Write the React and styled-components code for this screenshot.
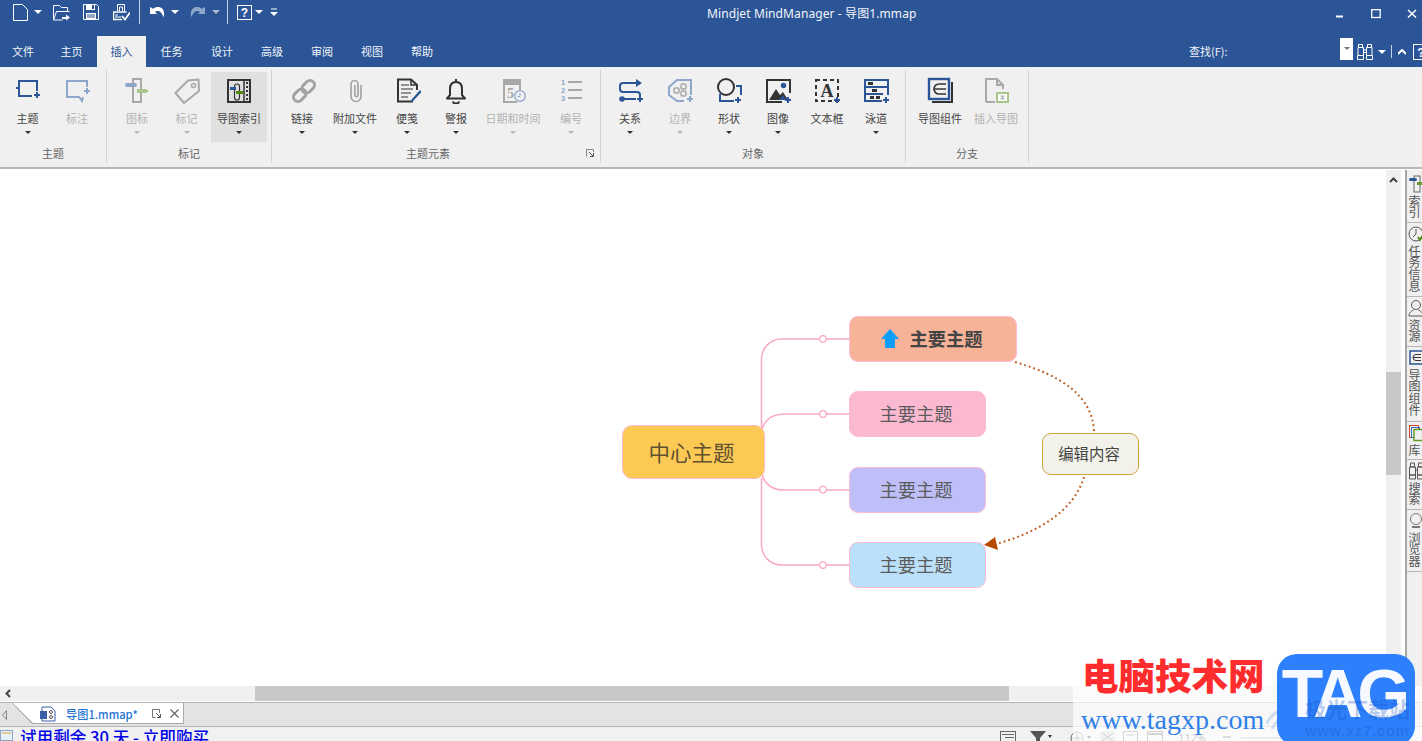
import React from 'react';
import styled, { createGlobalStyle } from 'styled-components';

const CJK = '"Noto Sans CJK SC", "Noto Sans", sans-serif';
const BLUE = '#2b5597';
const LBLUE = '#8fa6cb';
const DARK = '#333333';
const GRAY = '#a8a8a8';
const PINK = '#f9a8c6';

const Global = createGlobalStyle`
  html, body { margin: 0; padding: 0; background: #fff; }
  * { box-sizing: border-box; }
`;

const Root = styled.div`
  position: relative; width: 1422px; height: 741px; overflow: hidden;
  display: flex; flex-direction: column; font-family: ${CJK}; background: #fff;
`;

/* title bar */
const TitleBar = styled.header`
  height: 36px; background: ${BLUE}; display: flex; flex-shrink: 0; color: #fff;
`;
const QuickBar = styled.div`
  width: 707px; height: 24px; padding-left: 13px; display: flex; align-items: center; flex-shrink: 0;
`;
const QuickSlot = styled.span`
  display: flex; margin-left: ${p => p.$ml || 0}px; flex-shrink: 0;
`;
const QuickSep = styled.span`
  width: 1px; height: ${p => p.$h || 24}px; background: #c9d4e6; margin-left: ${p => p.$ml}px; flex-shrink: 0;
`;
const Caret = styled.span`
  display: block; width: 0; height: 0; flex-shrink: 0;
  border-left: ${p => p.$s || 4}px solid transparent;
  border-right: ${p => p.$s || 4}px solid transparent;
  border-top: ${p => p.$s || 4}px solid ${p => p.$c || '#fff'};
  margin-left: ${p => p.$ml || 0}px;
`;
const AppTitle = styled.div`
  font: 12px/28px "Noto Sans", ${CJK}; color: #f4f6fa; white-space: nowrap; letter-spacing: .1px;
`;
const WindowControls = styled.div`
  margin-left: auto; margin-right: -8px; display: flex; height: 28px; flex-shrink: 0;
`;
const WinBtn = styled.span`
  width: 36px; display: flex; align-items: center; justify-content: center;
`;

/* tabs */
const TabRow = styled.nav`
  height: 31px; background: ${BLUE}; display: flex; flex-shrink: 0; align-items: stretch;
`;
const Tab = styled.span`
  width: ${p => p.$w || 50}px; display: flex; align-items: center; justify-content: center; padding-bottom: 2px;
  font-size: 11px; color: ${p => p.$active ? BLUE : '#f2f5fa'};
  background: ${p => p.$active ? '#f0f0f0' : 'transparent'};
`;
const SearchGroup = styled.div`
  margin-left: auto; display: flex; align-items: center; width: 233px; flex-shrink: 0; color: #fff;
`;
const SearchLabel = styled.span`
  width: 151px; flex-shrink: 0; font-size: 11px; color: #f2f5fa; padding-bottom: 2px;
`;
const SearchCombo = styled.span`
  width: 13px; height: 22px; flex-shrink: 0; background: #fff; display: flex; align-items: center; justify-content: center;
  margin-top: -6px;
`;

/* ribbon */
const Ribbon = styled.section`
  height: 100px; background: #f0f0f0; display: flex; padding-top: 3px; flex-shrink: 0;
`;
const Group = styled.div`
  width: ${p => p.$w}px; height: 93px; border-right: 1px solid #d4d4d4; flex-shrink: 0;
  display: flex; flex-direction: column;
`;
const GroupButtons = styled.div`
  display: flex; height: 70px; margin-top: 2px; padding-left: ${p => p.$pl}px;
`;
const RBtn = styled.div`
  width: ${p => p.$w}px; height: 70px; flex-shrink: 0; display: flex; flex-direction: column; align-items: center;
  padding-top: 4px; background: ${p => p.$active ? '#e0e0e0' : 'transparent'};
`;
const RIcon = styled.span`
  width: 28px; height: 28px; display: flex;
`;
const RLabel = styled.span`
  font-size: 11px; line-height: 16px; margin-top: 6px; white-space: nowrap;
  color: ${p => p.$off ? '#b2b2b2' : '#444'};
`;
const RCaret = styled(Caret)`
  margin-top: 5px;
`;
const GroupFoot = styled.div`
  display: flex; align-items: center; height: 16px; margin-top: 3px;
`;
const GroupName = styled.span`
  flex: 1; text-align: center; font-size: 11px; line-height: 16px; color: #666; padding-right: ${p => p.$pr || 0}px;
`;
const Launcher = styled.span`
  display: flex; margin-right: 6px;
`;
const RibbonEdge = styled.div`
  height: 3px; flex-shrink: 0; background: #fff; border-top: 2px solid #b6b6b6;
`;

/* main */
const Main = styled.main`
  flex: 1; min-height: 0; display: flex;
`;
const WorkColumn = styled.div`
  width: 1401px; display: flex; flex-direction: column; flex-shrink: 0;
`;
const WorkRow = styled.div`
  height: 516px; display: flex;
`;
const Canvas = styled.div`
  position: relative; width: 1386px; height: 516px; background: #fff; flex-shrink: 0;
`;
const Lines = styled.svg`
  position: absolute; left: 0; top: 0;
`;
const VScroll = styled.div`
  width: 15px; background: #f0f0f0; display: flex; flex-direction: column; align-items: center;
`;
const VThumb = styled.div`
  width: 15px; height: 103px; background: #c8c8c8; margin-top: 189px;
`;
const ArrowBox = styled.span`
  display: flex; margin-top: ${p => p.$mt || 0}px; margin-left: ${p => p.$ml || 0}px;
`;
const HScroll = styled.div`
  height: 15px; background: #f0f0f0; display: flex; align-items: center; position: relative; flex-shrink: 0;
`;
const HThumb = styled.div`
  width: 754px; height: 15px; background: #c8c8c8; margin-left: 244px;
`;
const Gutter = styled.div`
  width: 6px; flex-shrink: 0; background: #fff; border-right: 2px solid #a6a6a6;
`;
const SidePanel = styled.aside`
  flex: 1; background: #f0f0f0; padding-top: 3px; overflow: hidden; display: flex; flex-direction: column;
`;
const SideTab = styled.div`
  height: ${p => p.$h}px; flex-shrink: 0; border-bottom: 1px solid #b5b5b5; display: flex; flex-direction: column;
  padding: 2px 0 0 1px; overflow: hidden;
`;
const SideIcon = styled.span`
  display: flex; width: 20px; height: 18px; flex-shrink: 0;
`;
const SideText = styled.span`
  writing-mode: vertical-rl; text-orientation: upright; font-size: 12px; line-height: 13px; color: #555;
  margin-top: 2px; letter-spacing: -.2px; align-self: flex-start;
`;

/* map nodes */
const Node = styled.div`
  position: absolute; left: ${p => p.$x}px; top: ${p => p.$y - 170}px; width: ${p => p.$w}px; height: ${p => p.$h}px;
  background: ${p => p.$bg}; border: ${p => p.$bw || 1.5}px solid ${p => p.$bc || '#fbbcd3'};
  border-radius: ${p => p.$r || 9}px; display: flex; align-items: center; justify-content: center; padding: 0 3px 2px 0;
  font-size: ${p => p.$fs || 18.3}px; color: ${p => p.$c || '#5c5c5c'}; font-weight: ${p => p.$fw || 400}; white-space: nowrap;
`;
const NodeIcon = styled.span`
  display: flex; margin-right: 10px; margin-left: 1px;
`;

/* doc tabs & status */
const DocBar = styled.div`
  height: 25px; flex-shrink: 0; background: #e3e3e3; border-top: 1px solid #b4b4b4; border-bottom: 1px solid #b4b4b4;
  display: flex; align-items: stretch;
`;
const DocPrev = styled.span`
  width: 12px; display: flex; align-items: center; padding-left: 2px; flex-shrink: 0;
`;
const DocTab = styled.div`
  width: 172px; height: 21px; flex-shrink: 0; position: relative; background: #a9a9a9;
  clip-path: polygon(0 0, 100% 0, 100% 100%, 20px 100%);
  display: flex; align-items: center; padding-left: 28px;
  &::before {
    content: ''; position: absolute; inset: 0 1px 1px 0; background: #fff;
    clip-path: polygon(1px 0, 100% 0, 100% 100%, 21px 100%);
  }
  & > * { position: relative; }
`;
const DocName = styled.span`
  font-size: 11.2px; font-weight: 500; color: #1f74d4; margin-left: 10px; white-space: nowrap; width: 81px;
`;
const DocAction = styled.span`
  display: flex; width: 18px; justify-content: center;
`;
const StatusBar = styled.footer`
  height: 14px; flex-shrink: 0; background: #f1f1f1; display: flex; align-items: flex-start; overflow: hidden;
`;
const Trial = styled.span`
  font-size: 16.6px; line-height: 20px; font-weight: 500; color: #0000e6; white-space: nowrap; margin-left: 7px; flex-shrink: 0;
`;
const StatusRight = styled.div`
  margin-left: 791px; display: flex; align-items: flex-start; padding-top: 4px; flex-shrink: 0;
`;
const StatusSlot = styled.span`
  display: flex; margin-left: ${p => p.$ml || 0}px; flex-shrink: 0;
`;
const Zoom = styled.span`
  font: 11px/12px "Noto Sans", sans-serif; color: #555; margin-left: ${p => p.$ml}px; margin-top: 1px;
`;

/* watermark */
const Wash = styled.div`
  position: absolute; left: 1073px; top: 686px; width: 349px; height: 55px; background: rgba(255,255,255,.72);
`;
const RedMark = styled.div`
  position: absolute; left: 1082px; top: 649px; font-size: 36.5px; line-height: 52px; font-weight: 900; color: #fe2c2c; white-space: nowrap;
`;
const UrlMark = styled.div`
  position: absolute; left: 1081px; top: 704px; font: 28px/32px "Liberation Serif", serif; color: #2f80e8; white-space: nowrap;
`;
const TagBadge = styled.div`
  position: absolute; left: 1277px; top: 654px; width: 138px; height: 92px; border-radius: 20px; background: #2d7ffb;
  display: flex; align-items: flex-start; justify-content: center;
  font: 700 68px/78px "Liberation Sans", sans-serif; letter-spacing: -5px; color: #f6f9ff; padding-right: 5px;
`;
const FaintCn = styled.div`
  position: absolute; left: 1305px; top: 695px; font-size: 21px; line-height: 26px; font-weight: 700; color: rgba(20,80,190,.28); white-space: nowrap;
`;
const FaintUrl = styled.div`
  position: absolute; left: 1305px; top: 722px; font: 700 15px/18px "Liberation Sans", sans-serif; color: rgba(20,80,190,.28); white-space: nowrap; letter-spacing: .6px;
`;
const Swirl = styled.svg`
  position: absolute; left: 1263px; top: 702px;
`;

/* drawing helpers */
const Ic = ({ children, w = 28, h = 28, fill = 'none' }) => (
  <svg width={w} height={h} viewBox={`0 0 ${w} ${h}`} fill={fill} xmlns="http://www.w3.org/2000/svg">{children}</svg>
);
const Plus = ({ x, y, c = BLUE, s = 3 }) => (
  <path d={`M${x - s} ${y}h${s * 2}M${x} ${y - s}v${s * 2}`} stroke={c} strokeWidth="2" fill="none" />
);

const ITopic = () => (<Ic>
  <rect x="5" y="5" width="18" height="15" stroke={BLUE} strokeWidth="2" />
  <path d="M2 12h3" stroke={BLUE} strokeWidth="2" />
  <rect x="18" y="15" width="10" height="9" fill="#f0f0f0" />
  <path d="M23 5v9M5 20h13" stroke={BLUE} strokeWidth="2" />
  <Plus x={23} y={19} />
</Ic>);
const ICallout = () => (<Ic>
  <path d="M24 11V5H4v16h12l3 4 1-4" stroke={LBLUE} strokeWidth="2" />
  <Plus x={24} y={15} c={LBLUE} />
</Ic>);
const IIcon = () => (<Ic>
  <rect x="10" y="3" width="8" height="23" stroke={GRAY} strokeWidth="2" />
  <rect x="2" y="7" width="12" height="4" rx="2" fill={LBLUE} />
  <path d="M14 13h9l3 2-3 2h-9z" fill="#a9c68a" />
</Ic>);
const ITag = () => (<Ic>
  <path d="M15 4.5 25.5 3.5 26 15 11 27 2.5 17z" stroke={GRAY} strokeWidth="2" strokeLinejoin="round" />
  <circle cx="20.5" cy="9.5" r="2" stroke={GRAY} strokeWidth="1.5" />
</Ic>);
const IIndex = () => (<Ic>
  <rect x="3" y="4" width="22" height="22" stroke={DARK} strokeWidth="2" />
  <path d="M19 4v22" stroke={DARK} strokeWidth="1.5" />
  <path d="M21 7h2M21 11h2M21 15h2M21 19h2M21 23h2" stroke={DARK} strokeWidth="2" />
  <rect x="9.5" y="8" width="5" height="16" rx="2.5" stroke={DARK} strokeWidth="1.2" />
  <rect x="5" y="11" width="6" height="3" fill={BLUE} />
  <rect x="11" y="15" width="7" height="3" fill="#4f8a10" />
</Ic>);
const ILink = () => (<Ic>
  <g transform="rotate(-45 16 15)" stroke="#a2a2a2" strokeWidth="3">
    <rect x="3" y="10.5" width="14" height="9" rx="4.5" />
    <rect x="15" y="10.5" width="14" height="9" rx="4.5" />
  </g>
</Ic>);
const IClip = () => (<Ic>
  <path d="M20 9v11.5a5 5 0 0 1-10 0V8a3.5 3.5 0 0 1 7 0v11a1.6 1.6 0 0 1-3.2 0V9" stroke="#a2a2a2" strokeWidth="1.6" />
</Ic>);
const INote = () => (<Ic>
  <path d="M24 14V9l-6-5.5H5v22h15" stroke={DARK} strokeWidth="2" />
  <path d="M18 3.5V9h6" stroke={DARK} strokeWidth="1.5" />
  <path d="M8 9h8M8 13h12M8 17h10M8 21h7" stroke={DARK} strokeWidth="1.2" />
  <path d="M27 14 19 23l-2 3.5 3.5-2L28.5 16z" fill={BLUE} />
</Ic>);
const IBell = () => (<Ic>
  <path d="M14 6c-4 0-6 3-6 7v6l-3 3.5h18L20 19v-6c0-4-2-7-6-7z" stroke={DARK} strokeWidth="2" strokeLinejoin="round" />
  <path d="M14 3v3M11 25.5a3 2 0 0 0 6 0" stroke={DARK} strokeWidth="2" />
</Ic>);
const IDate = () => (<Ic>
  <rect x="4" y="3" width="18" height="6" fill={GRAY} />
  <path d="M5 9v17h13M21 9v5" stroke={GRAY} strokeWidth="2" />
  <text x="8" y="22" fontFamily="Liberation Serif, serif" fontSize="14" fontWeight="700" fill={GRAY}>5</text>
  <circle cx="21" cy="20" r="5.3" fill="#f0f0f0" stroke={LBLUE} strokeWidth="1.3" />
  <path d="M21 17v3.5h-2.5" stroke={LBLUE} strokeWidth="1" />
</Ic>);
const INumber = () => (<Ic>
  <path d="M11 6h14M11 14h14M11 22h14" stroke={GRAY} strokeWidth="2" />
  <text x="4" y="9" fontFamily="Liberation Sans, sans-serif" fontSize="7.5" fontWeight="700" fill={LBLUE}>1</text>
  <text x="4" y="17" fontFamily="Liberation Sans, sans-serif" fontSize="7.5" fontWeight="700" fill={LBLUE}>2</text>
  <text x="4" y="25" fontFamily="Liberation Sans, sans-serif" fontSize="7.5" fontWeight="700" fill={LBLUE}>3</text>
</Ic>);
const IRelation = () => (<Ic>
  <path d="M21 7H7a3 3 0 0 0-3 3v3a3 3 0 0 0 3 3h14a3 3 0 0 1 3 3v1" stroke={BLUE} strokeWidth="2" />
  <path d="M20 3l6 4-6 4z" fill={BLUE} />
  <circle cx="6" cy="23" r="2.8" fill={BLUE} />
  <path d="M6 23h14" stroke={BLUE} strokeWidth="2" />
  <Plus x={24} y={23} />
</Ic>);
const IBoundary = () => (<Ic>
  <path d="M25 19V4H11L3 11v8l8 6h7" stroke={LBLUE} strokeWidth="2" />
  <rect x="8" y="12" width="5" height="5" rx="1.5" stroke={GRAY} strokeWidth="1.5" />
  <rect x="15" y="8" width="5" height="5" rx="1.5" stroke={GRAY} strokeWidth="1.5" />
  <rect x="15" y="15" width="5" height="5" rx="1.5" stroke={GRAY} strokeWidth="1.5" />
  <Plus x={24} y={23} c={LBLUE} />
</Ic>);
const IShape = () => (<Ic>
  <path d="M21 10h5v9M5 18v7h14" stroke={BLUE} strokeWidth="2" />
  <circle cx="11" cy="11" r="8" fill="#f0f0f0" stroke={DARK} strokeWidth="2" />
  <Plus x={23} y={24} />
</Ic>);
const IImage = () => (<Ic>
  <path d="M26 17V4H3v22h15" stroke={DARK} strokeWidth="2" />
  <path d="M5 24 12 13l4 6 3-3 5 8z" fill={DARK} />
  <circle cx="19.5" cy="9.5" r="2.7" fill={BLUE} />
  <path d="M15 24l4-5 3 5z" fill={BLUE} />
  <Plus x={24} y={24} />
</Ic>);
const ITextBox = () => (<Ic>
  <rect x="3" y="4" width="22" height="21" stroke={DARK} strokeWidth="2" strokeDasharray="4 3" />
  <text x="14" y="21" textAnchor="middle" fontFamily="Liberation Serif, serif" fontWeight="700" fontSize="18" fill={DARK}>A</text>
  <Plus x={24} y={24} />
</Ic>);
const ILane = () => (<Ic>
  <path d="M26 19V4H3v21h17M3 11h23M3 18h18" stroke={BLUE} strokeWidth="2" />
  <path d="M6 6h5v3H6zM10 13h5v3h-5zM8 20h4v3H8zM14 20h4v3h-4z" fill={DARK} />
  <Plus x={24} y={24} />
</Ic>);
const IPart = () => (<Ic>
  <path d="M26 6v20H6" stroke={DARK} strokeWidth="2" />
  <rect x="3" y="3" width="20" height="20" stroke={BLUE} strokeWidth="2.4" />
  <path d="M13 8a5 5 0 0 0 0 10h7M9 13h11M13 8h7" stroke={DARK} strokeWidth="1.7" />
</Ic>);
const IInsert = () => (<Ic>
  <path d="M4 26V3h11l6 6v4M15 3v6h6M4 26h9" stroke={GRAY} strokeWidth="2" />
  <rect x="15" y="17" width="11" height="9" fill="#fff" stroke="#a9c68a" strokeWidth="2" />
  <path d="M18 19.5l5 4M23 19.5l-5 4M20.5 19v5" stroke={GRAY} strokeWidth=".9" />
</Ic>);

const groups = [
  { w: 107, pl: 3, name: '主题', btns: [
    { w: 49, l: '主题', I: ITopic, c: 1 }, { w: 50, l: '标注', I: ICallout, off: 1 }] },
  { w: 165, pl: 5, name: '标记', btns: [
    { w: 50, l: '图标', I: IIcon, off: 1, c: 1 }, { w: 49, l: '标记', I: ITag, off: 1, c: 1 },
    { w: 56, l: '导图索引', I: IIndex, c: 1, active: 1 }] },
  { w: 329, pl: 5, name: '主题元素', launcher: 1, btns: [
    { w: 50, l: '链接', I: ILink, c: 1 }, { w: 56, l: '附加文件', I: IClip, c: 1 }, { w: 48, l: '便笺', I: INote, c: 1 },
    { w: 50, l: '警报', I: IBell, c: 1 }, { w: 64, l: '日期和时间', I: IDate, off: 1, c: 1 }, { w: 52, l: '编号', I: INumber, off: 1, c: 1 }] },
  { w: 305, pl: 4, name: '对象', btns: [
    { w: 50, l: '关系', I: IRelation, c: 1 }, { w: 50, l: '边界', I: IBoundary, off: 1, c: 1 }, { w: 48, l: '形状', I: IShape, c: 1 },
    { w: 50, l: '图像', I: IImage, c: 1 }, { w: 48, l: '文本框', I: ITextBox }, { w: 50, l: '泳道', I: ILane, c: 1 }] },
  { w: 123, pl: 5, name: '分支', btns: [
    { w: 58, l: '导图组件', I: IPart }, { w: 54, l: '插入导图', I: IInsert, off: 1 }] },
];

const tabs = [['文件', 46], ['主页', 51], ['插入', 49, true], ['任务', 51], ['设计'], ['高级'], ['审阅'], ['视图'], ['帮助']];

const W = '#fff';
const qDoc = <Ic w={15} h={17}><path d="M.5.5h9l5 5v11H.5z" stroke={W} /></Ic>;
const qOpen = <Ic w={17} h={17}><path d="M.5 16V1.5h6l2 2h6v4M.5 16l3-8.5h13M.5 16h9" stroke={W} /><path d="M9 13h4v-2.5l4 3-4 3V15H9z" fill={W} /></Ic>;
const qSave = <Ic w={16} h={16}><path d="M.5.5h13l2 2v13H.5z" stroke={W} /><path d="M3 0h9v6H3z" fill={W} /><path d="M9 1h2v4H9z" fill={BLUE} /><path d="M3 9h10v7H3z" fill={W} /><path d="M4 11h8M4 13h8" stroke={BLUE} /></Ic>;
const qPrint = <Ic w={17} h={17}><path d="M4.5 7V.5h7V7" stroke={W} /><path d="M6.5 7V3h3v4" stroke={W} /><path d="M9 15.500H.5V8h13" stroke={W} strokeWidth="1.400" /><path d="M2 11h3M2 13h6" stroke={W} /><path d="M9 12l3 3.500 5-7" stroke={W} strokeWidth="1.800" /></Ic>;
const qUndo = <Ic w={16} h={13}><path d="M1 1v7h7L6 5.800c3-2 6.500-1 8.500 5.500 2-6-1-10.300-5.500-10.300-2 0-3.500.6-4.800 1.800z" fill={W} /></Ic>;
const qRedo = <Ic w={16} h={13}><path d="M15 1v7H8l2-2.200c-3-2-6.500-1-8.500 5.500-2-6 1-10.300 5.500-10.300 2 0 3.500.6 4.800 1.800z" fill="#8ea6c9" /></Ic>;
const qHelp = (s = 15) => <Ic w={s} h={s}><rect x=".5" y=".5" width={s - 1} height={s - 1} stroke={W} /><text x={s / 2} y={s - 3} textAnchor="middle" fontFamily="Liberation Sans, sans-serif" fontWeight="700" fontSize="12" fill={W}>?</text></Ic>;
const qMore = <Ic w={8} h={9}><path d="M1 1h6" stroke={W} /><path d="M0 4h8L4 8z" fill={W} /></Ic>;

const sideTabs = [
  { h: 50, t: '索引', i: <Ic w={20} h={18}><rect x="6" y="1" width="6" height="16" stroke="#666" /><rect x="1" y="3" width="8" height="3" rx="1.500" fill={BLUE} /><rect x="9" y="7" width="7" height="3" fill="#6a9a2c" /></Ic> },
  { h: 74, t: '任务信息', i: <Ic w={20} h={18}><circle cx="8" cy="9" r="7" stroke="#555" /><path d="M8 4v5l-3 3" stroke="#555" /><path d="M10 12l2 3 3-5" stroke="#4f8a10" strokeWidth="2" /></Ic> },
  { h: 50, t: '资源', i: <Ic w={20} h={18}><circle cx="8" cy="6" r="4.500" stroke="#555" /><path d="M1 17c0-4 3-5 4.500-6M15 17c0-4-3-5-4.500-6M1 17h14" stroke="#555" /></Ic> },
  { h: 75, t: '导图组件', i: <Ic w={20} h={18}><rect x="2" y="2" width="13" height="13" stroke={BLUE} strokeWidth="1.500" /><path d="M8 5.500a3 3 0 0 0 0 6h5M5 8.500h8M8 5.500h5" stroke="#333" /></Ic> },
  { h: 38, t: '库', i: <Ic w={20} h={18}><rect x="1.500" y="1.500" width="9" height="12" stroke="#d8452e" /><rect x="3.500" y="3.500" width="8" height="10" stroke="#3a6fc0" /><rect x="6" y="5.500" width="10" height="11" fill="#f0f0f0" stroke="#5d9a1c" strokeWidth="1.400" /></Ic> },
  { h: 50, t: '搜索', i: <Ic w={20} h={18}><path d="M2.500 1h4v4h-4zM10.500 1h4v4h-4zM1.500 5h6v8h-6zM9.500 5h6v8h-6zM7.500 8h2M1.500 13h6v4h-6zM9.500 13h6v4h-6z" stroke="#555" /></Ic> },
  { h: 62, t: '浏览器', i: <Ic w={20} h={18}><circle cx="8" cy="7" r="5.500" stroke="#777" /><path d="M4 15h8" stroke="#777" strokeWidth="2" /></Ic> },
];

function Mind() {
  return (
    <Canvas>
      <Lines width="1386" height="516" viewBox="0 170 1386 516" fill="none">
        <g stroke={PINK} strokeWidth="1.500">
          <path d="M761.500 428V359a20 20 0 0 1 20-20H849" />
          <path d="M761.500 478V545a20 20 0 0 0 20 20H849" />
          <path d="M762 430Q766 414 785 414H849" />
          <path d="M762 474Q766 490 785 490H849" />
        </g>
        <g stroke={PINK} strokeWidth="1.300" fill="#fff">
          <circle cx="823" cy="339" r="3.300" />
          <circle cx="823" cy="414" r="3.300" />
          <circle cx="823" cy="489.500" r="3.300" />
          <circle cx="823" cy="565" r="3.300" />
        </g>
        <g stroke="#bf5a1c" strokeWidth="2" strokeDasharray="1.800 3">
          <path d="M1015 362C1060 375 1092 395 1094 431" />
          <path d="M1084 477C1074 510 1040 532 996 544" />
        </g>
        <path d="M984 545 995 537 998 550z" fill="#b84a00" />
      </Lines>
      <Node $x={621.500} $y={425} $w={143} $h={54} $bg="#fdc955" $fs={21.500} $c="#5d5130" $r={10}>中心主题</Node>
      <Node $x={849} $y={316} $w={168} $h={46} $bg="#f7b398" $fw={700} $c="#444">
        <NodeIcon>
          <Ic w={18} h={19}><path d="M9 0l9 10h-4v9H4v-9H0z" fill="#0a9fff" /></Ic>
        </NodeIcon>
        主要主题
      </Node>
      <Node $x={849} $y={391} $w={137} $h={46} $bg="#fbb9d1">主要主题</Node>
      <Node $x={849} $y={467} $w={137} $h={46} $bg="#bebff8">主要主题</Node>
      <Node $x={849} $y={542} $w={137} $h={46} $bg="#bbe1fa">主要主题</Node>
      <Node $x={1042} $y={433} $w={97} $h={42} $bg="#f3f2ea" $bc="#cba63f" $bw={1} $fs={15.400} $c="#444" $r={9}>编辑内容</Node>
    </Canvas>
  );
}

export default function App() {
  return (
    <Root>
      <Global />
      <TitleBar>
        <QuickBar>
          <QuickSlot>{qDoc}</QuickSlot>
          <Caret $ml={6} />
          <QuickSlot $ml={11}>{qOpen}</QuickSlot>
          <QuickSlot $ml={13}>{qSave}</QuickSlot>
          <QuickSlot $ml={14}>{qPrint}</QuickSlot>
          <QuickSep $ml={9} />
          <QuickSlot $ml={9}>{qUndo}</QuickSlot>
          <Caret $ml={6} />
          <QuickSlot $ml={11}>{qRedo}</QuickSlot>
          <Caret $ml={6} $c="#a7b8d3" />
          <QuickSep $ml={7} />
          <QuickSlot $ml={9}>{qHelp(15)}</QuickSlot>
          <Caret $ml={3} />
          <QuickSlot $ml={7}>{qMore}</QuickSlot>
        </QuickBar>
        <AppTitle>Mindjet MindManager - 导图1.mmap</AppTitle>
        <WindowControls>
          <WinBtn><Ic w={8} h={10}><path d="M0 7.500h7" stroke={W} strokeWidth="2" /></Ic></WinBtn>
          <WinBtn><Ic w={10} h={10}><rect x=".7" y=".7" width="8.500" height="7.800" stroke={W} strokeWidth="1.300" /></Ic></WinBtn>
          <WinBtn><Ic w={10} h={10}><path d="M1 1l8 7.500M9 1 1 8.500" stroke={W} strokeWidth="1.500" /></Ic></WinBtn>
        </WindowControls>
      </TitleBar>
      <TabRow>
        {tabs.map(([t, w, a]) => <Tab key={t} $w={w} $active={a}>{t}</Tab>)}
        <SearchGroup>
          <SearchLabel>查找(F):</SearchLabel>
          <SearchCombo><Caret $s={3} $c="#777" /></SearchCombo>
          <QuickSlot $ml={4}>
            <Ic w={17} h={17}><path d="M1.500 1.500h4v3h-4zM10.500 1.500h4v3h-4zM1 4.500h5.500v8H1zM9.500 4.500H15v8H9.500zM6.500 7h3M6.500 9.500h3M.5 12.500h6v4h-6zM9.500 12.500h6v4h-6z" stroke={W} /></Ic>
          </QuickSlot>
          <Caret $ml={4} />
          <QuickSep $ml={5} $h={13} />
          <QuickSlot $ml={6}><Ic w={8} h={6}><path d="M0 5l4-4 4 4" stroke={W} strokeWidth="2" /></Ic></QuickSlot>
          <QuickSlot $ml={7}>{qHelp(16)}</QuickSlot>
        </SearchGroup>
      </TabRow>
      <Ribbon>
        {groups.map(g => (
          <Group key={g.name} $w={g.w}>
            <GroupButtons $pl={g.pl}>
              {g.btns.map(b => (
                <RBtn key={b.l} $w={b.w} $active={b.active}>
                  <RIcon><b.I /></RIcon>
                  <RLabel $off={b.off}>{b.l}</RLabel>
                  {b.c ? <RCaret $s={3.500} $c={b.off ? '#b8b8b8' : '#333'} /> : null}
                </RBtn>
              ))}
            </GroupButtons>
            <GroupFoot>
              <GroupName $pr={g.launcher ? 2 : 0}>{g.name}</GroupName>
              {g.launcher ? (
                <Launcher>
                  <Ic w={8} h={8}><path d="M.5 3V.5H7.500V3M.5 .5v7" stroke="#888" /><path d="M3 3l4 4M7.500 4v3.500H4" stroke="#555" /></Ic>
                </Launcher>
              ) : null}
            </GroupFoot>
          </Group>
        ))}
      </Ribbon>
      <RibbonEdge />
      <Main>
        <WorkColumn>
          <WorkRow>
            <Mind />
            <VScroll>
              <ArrowBox $mt={7}><Ic w={9} h={6}><path d="M1 5l3.500-3.500L8 5" stroke="#444" strokeWidth="2" /></Ic></ArrowBox>
              <VThumb />
            </VScroll>
          </WorkRow>
          <HScroll>
            <ArrowBox $ml={5}><Ic w={6} h={9}><path d="M5 1 1.500 4.500 5 8" stroke="#444" strokeWidth="2" /></Ic></ArrowBox>
            <HThumb />
          </HScroll>
        </WorkColumn>
        <Gutter />
        <SidePanel>
          {sideTabs.map(s => (
            <SideTab key={s.t} $h={s.h}>
              <SideIcon>{s.i}</SideIcon>
              <SideText>{s.t}</SideText>
            </SideTab>
          ))}
        </SidePanel>
      </Main>
      <DocBar>
        <DocPrev><Ic w={5} h={10}><path d="M4.500 .5v9L.5 5z" stroke="#888" /></Ic></DocPrev>
        <DocTab>
          <Ic w={16} h={16}>
            <path d="M2 1h9l4 4v10H2z" stroke="#3a5ea8" fill="#fff" />
            <rect x="0" y="5" width="7" height="8" fill="#3a5ea8" />
            <circle cx="11" cy="6" r="1.500" stroke="#555" /><circle cx="11" cy="11" r="1.500" stroke="#555" />
          </Ic>
          <DocName>导图1.mmap*</DocName>
          <DocAction><Ic w={9} h={9}><path d="M.5 4V.5h7V4M.5 .5v8h3" stroke="#777" /><path d="M4 4l4 4M8.500 5v3.500H5" stroke="#555" /></Ic></DocAction>
          <DocAction><Ic w={9} h={9}><path d="M.5 .5l8 8M8.500 .5l-8 8" stroke="#666" strokeWidth="1.200" /></Ic></DocAction>
        </DocTab>
      </DocBar>
      <StatusBar>
        <ArrowBox $mt={3}><Ic w={13} h={11}><rect x=".5" y=".5" width="12" height="10" fill="#e8f0fa" stroke="#8aa6c8" /><path d="M2 3h9" stroke="#e0a030" /></Ic></ArrowBox>
        <Trial>试用剩余 30 天 - 立即购买</Trial>
        <StatusRight>
          <StatusSlot><Ic w={16} h={12}><rect x=".5" y=".5" width="15" height="11" stroke="#666" /><path d="M2 3.500h12M5 6.500h9" stroke="#666" /></Ic></StatusSlot>
          <StatusSlot $ml={14}><Ic w={22} h={10}><path d="M0 0h16l-6 7v3H6V7z" fill="#555" /><path d="M18 4h4l-2 3z" fill="#333" /></Ic></StatusSlot>
          <StatusSlot $ml={18}><Ic w={22} h={12}><circle cx="7" cy="7" r="6" stroke="#666" /><path d="M7 3v8M3 7h8" stroke="#666" /><path d="M17 5h4l-2 3z" fill="#333" /></Ic></StatusSlot>
          <StatusSlot $ml={8}><Ic w={15} h={12}><rect x="0" y="0" width="15" height="12" fill="#d5d5d5" /><path d="M2 2l11 8M13 2 2 10" stroke="#666" /></Ic></StatusSlot>
          <StatusSlot $ml={8}><Ic w={15} h={12}><rect x=".5" y=".5" width="14" height="11" stroke="#666" /><path d="M3 4h9" stroke="#666" /></Ic></StatusSlot>
          <StatusSlot $ml={9}><Ic w={16} h={12}><rect x=".5" y=".5" width="15" height="11" stroke="#666" /><path d="M1 3h14" stroke="#666" strokeWidth="2" /></Ic></StatusSlot>
          <Zoom $ml={15}>112%</Zoom>
          <StatusSlot $ml={17}><Ic w={62} h={10}><path d="M0 6h8" stroke="#666" strokeWidth="1.500" /><path d="M18 7h44" stroke="#888" /></Ic></StatusSlot>
        </StatusRight>
      </StatusBar>
      <Wash />
      <RedMark>电脑技术网</RedMark>
      <UrlMark>www.tagxp.com</UrlMark>
      <Swirl width="50" height="39" viewBox="0 0 50 39" fill="none">
        <path d="M4 22C8 8 30 2 44 10M9 27C14 15 30 10 42 17M16 30c6-8 16-9 24-5" stroke="rgba(60,140,210,.22)" strokeWidth="3" />
      </Swirl>
      <TagBadge>TAG</TagBadge>
      <FaintCn>极光下载站</FaintCn>
      <FaintUrl>www.xz7.com</FaintUrl>
    </Root>
  );
}
